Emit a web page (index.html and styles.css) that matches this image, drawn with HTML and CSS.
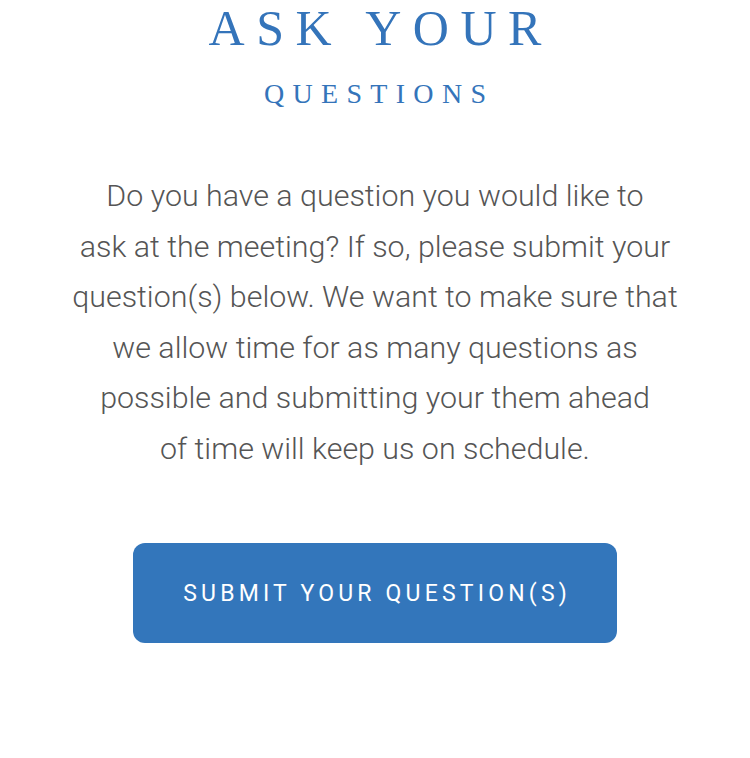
FILE: index.html
```html
<!DOCTYPE html>
<html lang="en">

<head>
  <meta charset="UTF-8">
  <meta name="viewport" content="width=device-width, initial-scale=1.0">
  <title>Ask Your Questions</title>
  <link rel="stylesheet" href="styles.css">
</head>

<body>
  <section class="ask-box">
    <h1 class="title">Ask your</h1>
    <h2 class="subtitle">Questions</h2>
    <p class="intro">
      Do you have a question you would like to<br>
      ask at the meeting? If so, please submit your<br>
      question(s) below. We want to make sure that<br>
      we allow time for as many questions as<br>
      possible and submitting your them ahead<br>
      of time will keep us on schedule.
    </p>
    <a class="submit-btn" href="#">Submit your question(s)</a>
  </section>
</body>

</html>
```

FILE: styles.css
```css
body {
  margin: 0;
  background: #fff;
}

.ask-box {
  display: flex;
  flex-direction: column;
  align-items: center;
  padding-bottom: 100px;
}

/* padding-left balances the trailing letter-spacing */
.title {
  margin: 0;
  padding-left: 11.5px;
  font-family: "Liberation Serif", serif;
  font-weight: 400;
  font-size: 50px;
  line-height: 56px;
  letter-spacing: 11.5px;
  text-transform: uppercase;
  color: #3474ba;
}

.subtitle {
  margin: 22px 0 0;
  padding-left: 8.3px;
  font-family: "Liberation Serif", serif;
  font-weight: 400;
  font-size: 28px;
  line-height: 32px;
  letter-spacing: 8.3px;
  text-transform: uppercase;
  color: #3474ba;
}

.intro {
  margin: 61px 0 0;
  font-family: Roboto, sans-serif;
  font-weight: 300;
  font-size: 30.4px;
  line-height: 50.5px;
  text-align: center;
  color: #555;
}

.submit-btn {
  display: flex;
  align-items: center;
  justify-content: center;
  width: 484px;
  height: 100px;
  margin-top: 69px;
  padding-left: 4.2px;
  box-sizing: border-box;
  background-color: #3376bb;
  border-radius: 12px;
  font-family: Roboto, sans-serif;
  font-size: 23px;
  letter-spacing: 4.2px;
  text-transform: uppercase;
  color: #fff;
  text-decoration: none;
}
```
